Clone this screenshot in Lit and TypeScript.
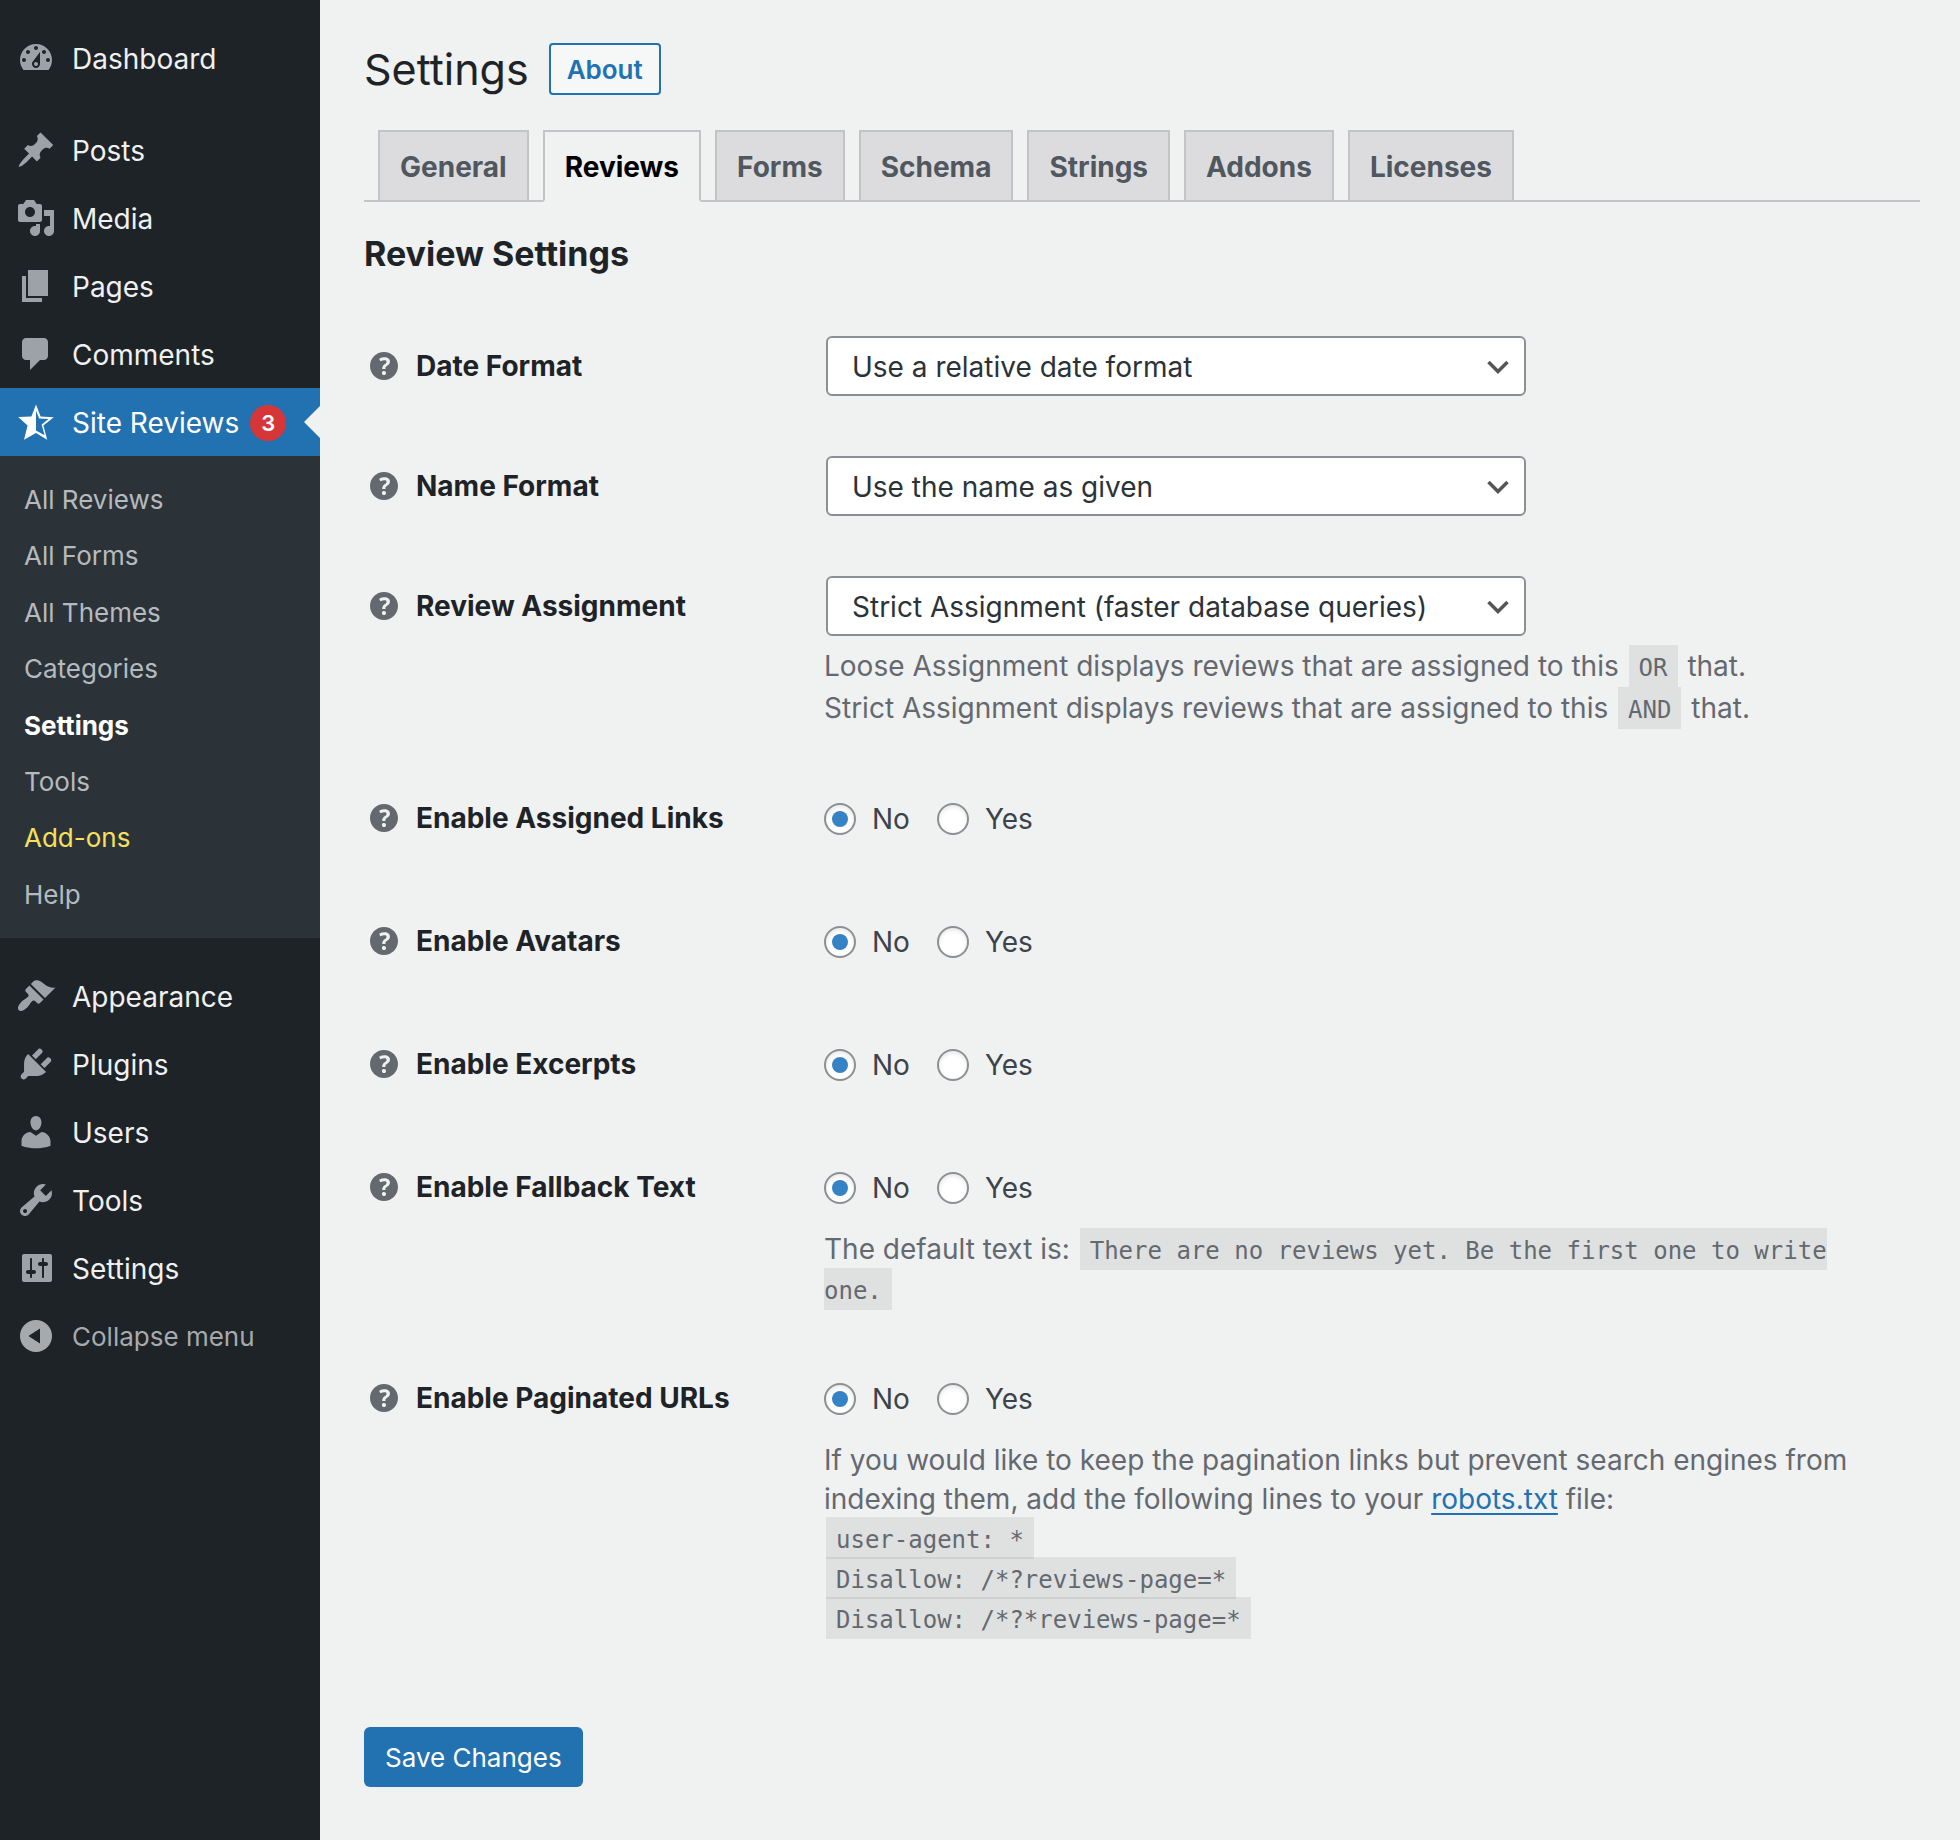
import { LitElement, html, css, svg, nothing, type TemplateResult } from "lit";
import { customElement, property, state } from "lit/decorators.js";
import { classMap } from "lit/directives/class-map.js";

const ICONS: Record<string, string> = {
  dashboard:
    "M3.76 16h12.48c1.1-1.37 1.76-3.11 1.76-5 0-4.42-3.58-8-8-8s-8 3.58-8 8c0 1.89.66 3.63 1.76 5zM10 4c.55 0 1 .45 1 1s-.45 1-1 1-1-.45-1-1 .45-1 1-1zM6 6c.55 0 1 .45 1 1s-.45 1-1 1-1-.45-1-1 .45-1 1-1zm8 0c.55 0 1 .45 1 1s-.45 1-1 1-1-.45-1-1 .45-1 1-1zm-5.37 5.55L12 7v6c0 1.1-.9 2-2 2s-2-.9-2-2c0-.57.24-1.08.63-1.45zM4 10c.55 0 1 .45 1 1s-.45 1-1 1-1-.45-1-1 .45-1 1-1zm12 0c.55 0 1 .45 1 1s-.45 1-1 1-1-.45-1-1 .45-1 1-1zm-5 3c0-.55-.45-1-1-1s-1 .45-1 1 .45 1 1 1 1-.45 1-1z",
  posts:
    "M10.44 3.02l1.82-1.82 6.36 6.35-1.83 1.82c-1.05-.68-2.48-.57-3.41.36l-.75.75c-.92.93-1.04 2.35-.35 3.41l-1.83 1.82-2.41-2.41-2.8 2.79c-.42.42-3.38 2.71-3.8 2.29s1.86-3.39 2.28-3.81l2.79-2.79L4.1 9.36l1.83-1.82c1.05.69 2.48.57 3.4-.36l.75-.75c.93-.92 1.05-2.35.36-3.41z",
  media:
    "M13 11V4c0-.55-.45-1-1-1h-1.67L9 1H5L3.67 3H2c-.55 0-1 .45-1 1v7c0 .55.45 1 1 1h10c.55 0 1-.45 1-1zM7 4.5c1.38 0 2.5 1.12 2.5 2.5S8.38 9.5 7 9.5 4.5 8.38 4.5 7 5.62 4.5 7 4.5zM14 6h5v10.5c0 1.38-1.12 2.5-2.5 2.5S14 17.88 14 16.5s1.12-2.5 2.5-2.5c.17 0 .34.02.5.05V9h-3V6zm-4 8.05V13h2v3.5c0 1.38-1.12 2.5-2.5 2.5S7 17.88 7 16.5 8.12 14 9.5 14c.17 0 .34.02.5.05z",
  pages: "M6 15V2h10v13H6zm-1 1h8v2H3V5h2v11z",
  comments:
    "M5 2h9c1.1 0 2 .9 2 2v7c0 1.1-.9 2-2 2h-2l-5 5v-5H5c-1.1 0-2-.9-2-2V4c0-1.1.9-2 2-2z",
  star:
    "M10 1.2l2.3 6.1 6.6.3-5.2 4.1 1.9 7.2-5.6-3.4-6 3.4 1.8-7.2L1.1 7.5l6.6-.2zM10 4.4v9.8l4.3 2.4-1.5-5.3 3.5-2.8-4.7-.2z",
  appearance:
    "M14.48 11.06L7.41 3.99l1.5-1.5c.5-.56 2.3-.47 3.51.32 1.21.8 1.43 1.28 2.91 2.1 1.18.64 2.45 1.26 4.45.85zm-.71.71L6.7 4.7 4.93 6.47c-.39.39-.39 1.02 0 1.41l1.06 1.06c.39.39.39 1.03 0 1.42-.6.6-1.43 1.11-2.21 1.69-.35.26-.7.53-1.01.84C1.43 14.23.4 16.08 1.4 17.07c.99 1 2.84-.03 4.18-1.36.31-.31.58-.66.85-1.02.57-.78 1.08-1.61 1.69-2.21.39-.39 1.02-.39 1.41 0l1.06 1.06c.39.39 1.02.39 1.41 0z",
  plugins:
    "M13.11 4.36L9.87 7.6 8 5.73l3.24-3.24c.35-.34 1.05-.2 1.56.32.52.51.66 1.21.31 1.55zm-8 1.77l.91-1.12 9.01 9.01-1.19.84c-.71.71-2.63 1.16-3.82 1.16H6.14L4.9 17.26c-.59.59-1.54.59-2.12 0-.59-.58-.59-1.53 0-2.12l1.24-1.24v-3.88c0-1.13.4-3.19 1.09-3.89zm7.26 3.97l3.24-3.24c.34-.35 1.04-.21 1.55.31.52.51.66 1.21.31 1.55l-3.24 3.25z",
  users:
    "M10 9.25c-2.27 0-2.73-3.44-2.73-3.44C7 4.02 7.82 2 9.97 2c2.16 0 2.98 2.02 2.71 3.81 0 0-.41 3.44-2.68 3.44zm0 2.57L12.72 10c2.39 0 4.52 2.33 4.52 4.53v2.49s-3.65 1.13-7.24 1.13c-3.65 0-7.24-1.13-7.24-1.13v-2.49c0-2.25 1.94-4.48 4.47-4.48z",
  tools:
    "M16.68 9.77c-1.34 1.34-3.3 1.67-4.95.99l-5.41 6.52c-.99.99-2.59.99-3.58 0s-.99-2.59 0-3.57l6.52-5.42c-.68-1.65-.35-3.61.99-4.95 1.28-1.28 3.12-1.62 4.72-1.06l-2.89 2.89 2.82 2.82 2.86-2.87c.53 1.58.18 3.39-1.08 4.65zM3.81 16.21c.4.39 1.04.39 1.43 0 .4-.4.4-1.04 0-1.43-.39-.4-1.03-.4-1.43 0-.39.39-.39 1.03 0 1.43z",
  settings:
    "M18 16V4c0-.55-.45-1-1-1H4c-.55 0-1 .45-1 1v12c0 .55.45 1 1 1h13c.55 0 1-.45 1-1zM8 11h1c.55 0 1 .45 1 1s-.45 1-1 1H8v1.5c0 .28-.22.5-.5.5s-.5-.22-.5-.5V13H6c-.55 0-1-.45-1-1s.45-1 1-1h1V5.5c0-.28.22-.5.5-.5s.5.22.5.5V11zm5-2h-1c-.55 0-1-.45-1-1s.45-1 1-1h1V5.5c0-.28.22-.5.5-.5s.5.22.5.5V7h1c.55 0 1 .45 1 1s-.45 1-1 1h-1v5.5c0 .28-.22.5-.5.5s-.5-.22-.5-.5V9z",
  collapse:
    "M10 2a8 8 0 1 0 0 16 8 8 0 0 0 0-16zM12 6.3v7.4L6.2 10z",
  help:
    "M17 10c0-3.87-3.14-7-7-7-3.87 0-7 3.13-7 7s3.13 7 7 7c3.86 0 7-3.13 7-7zm-6.3 1.48H9.14v-.43c0-.38.08-.7.24-.98s.46-.57.88-.89c.41-.29.68-.53.81-.71.14-.18.2-.39.2-.62 0-.25-.09-.44-.28-.58-.19-.13-.45-.19-.79-.19-.58 0-1.25.19-2 .57l-.64-1.28c.87-.49 1.8-.74 2.77-.74.81 0 1.45.2 1.92.58.48.39.71.91.71 1.55 0 .43-.09.8-.29 1.11-.19.32-.57.67-1.11 1.06-.38.28-.61.49-.71.63-.1.15-.15.34-.15.57v.35zm-1.47 2.74c-.18-.17-.27-.42-.27-.73 0-.33.08-.58.26-.75s.43-.25.77-.25c.32 0 .57.09.75.26s.27.42.27.74c0 .3-.09.55-.27.72-.18.18-.43.27-.75.27-.33 0-.58-.09-.76-.26z",
};

const icon = (name: string) => html`
  <svg class="icon" viewBox="0 0 20 20" aria-hidden="true">
    ${svg`<path fill-rule="evenodd" d=${ICONS[name]}></path>`}
  </svg>
`;

const base = css`
  * {
    box-sizing: border-box;
  }
  .icon {
    display: block;
    flex: none;
    width: 40px;
    height: 40px;
    fill: currentColor;
  }
`;

interface MenuEntry {
  label: string;
  icon: string;
  count?: number;
  children?: string[];
}

const MENU: MenuEntry[][] = [
  [{ label: "Dashboard", icon: "dashboard" }],
  [
    { label: "Posts", icon: "posts" },
    { label: "Media", icon: "media" },
    { label: "Pages", icon: "pages" },
    { label: "Comments", icon: "comments" },
    {
      label: "Site Reviews",
      icon: "star",
      count: 3,
      children: [
        "All Reviews",
        "All Forms",
        "All Themes",
        "Categories",
        "Settings",
        "Tools",
        "Add-ons",
        "Help",
      ],
    },
  ],
  [
    { label: "Appearance", icon: "appearance" },
    { label: "Plugins", icon: "plugins" },
    { label: "Users", icon: "users" },
    { label: "Tools", icon: "tools" },
    { label: "Settings", icon: "settings" },
  ],
];

@customElement("admin-menu")
export class AdminMenu extends LitElement {
  static styles = [
    base,
    css`
      :host {
        display: block;
        background: #1d2327;
        color: #f0f0f1;
      }
      .menu {
        display: flex;
        flex-direction: column;
        gap: 24px;
        padding-top: 24px;
      }
      .list {
        margin: 0;
        padding: 0;
        list-style: none;
      }
      .link {
        position: relative;
        display: flex;
        align-items: center;
        width: 100%;
        height: 68px;
        padding: 0 16px;
        gap: 16px;
        border: 0;
        background: none;
        font: inherit;
        text-align: left;
        text-decoration: none;
        color: inherit;
      }
      .link .icon {
        color: #9ca2a7;
      }
      .link.open {
        background: #2271b1;
        color: #fff;
      }
      .link.open .icon {
        color: #fff;
      }
      .link.open::after {
        content: "";
        position: absolute;
        right: 0;
        top: 18px;
        border: 16px solid transparent;
        border-left-width: 0;
        border-right-color: #f0f1f1;
      }
      .link.collapse,
      .link.collapse .icon {
        color: #a7aaad;
      }
      .link.collapse {
        font-size: 26px;
      }
      .name {
        display: flex;
        align-items: center;
        gap: 11px;
        padding-top: 2px;
        white-space: nowrap;
      }
      .count {
        width: 36px;
        border-radius: 18px;
        background: #d63638;
        font-size: 22px;
        font-weight: 600;
        line-height: 36px;
        text-align: center;
      }
      .sub {
        margin: 0;
        padding: 15px 0 16px;
        list-style: none;
        background: #2c3338;
        font-size: 26px;
        line-height: 1.4;
      }
      .sublink {
        display: block;
        padding: 11px 24px 9px;
        color: #b5babf;
        text-decoration: none;
      }
      .sublink.current {
        color: #fff;
        font-weight: 700;
      }
      .sublink.promo {
        color: #f6e05e;
      }
    `,
  ];

  private entry(item: MenuEntry) {
    return html`
      <li>
        <a class=${classMap({ link: true, open: !!item.children })} href="#">
          ${icon(item.icon)}
          <span class="name"
            >${item.label}${item.count
              ? html`<span class="count">${item.count}</span>`
              : nothing}</span
          >
        </a>
        ${item.children
          ? html`<ul class="sub">
              ${item.children.map(
                (c) => html`<li>
                  <a
                    class=${classMap({
                      sublink: true,
                      current: c === "Settings",
                      promo: c === "Add-ons",
                    })}
                    href="#"
                    >${c}</a
                  >
                </li>`
              )}
            </ul>`
          : nothing}
      </li>
    `;
  }

  render() {
    return html`
      <nav class="menu" aria-label="Main menu">
        ${MENU.map(
          (group, i) => html`<ul class="list">
            ${group.map((item) => this.entry(item))}
            ${i === MENU.length - 1
              ? html`<li>
                  <button class="link collapse" type="button">
                    ${icon("collapse")}<span class="name">Collapse menu</span>
                  </button>
                </li>`
              : nothing}
          </ul>`
        )}
      </nav>
    `;
  }
}

interface Setting {
  id: string;
  label: string;
  choice?: string;
  help?: TemplateResult;
}

const SETTINGS: Setting[] = [
  { id: "date", label: "Date Format", choice: "Use a relative date format" },
  { id: "name", label: "Name Format", choice: "Use the name as given" },
  {
    id: "assignment",
    label: "Review Assignment",
    choice: "Strict Assignment (faster database queries)",
    help: html`<p class="help spaced">
      Loose Assignment displays reviews that are assigned to this
      <code>OR</code> that.<br />Strict Assignment displays reviews that are
      assigned to this <code>AND</code> that.
    </p>`,
  },
  { id: "links", label: "Enable Assigned Links" },
  { id: "avatars", label: "Enable Avatars" },
  { id: "excerpts", label: "Enable Excerpts" },
  {
    id: "fallback",
    label: "Enable Fallback Text",
    help: html`<p class="help">
      The default text is:
      <code>There are no reviews yet. Be the first one to write one.</code>
    </p>`,
  },
  {
    id: "urls",
    label: "Enable Paginated URLs",
    help: html`<p class="help">
      If you would like to keep the pagination links but prevent search engines
      from indexing them, add the following lines to your
      <a class="ref" href="#">robots.txt</a> file:<br /><code
        >user-agent: *</code
      ><br /><code>Disallow: /*?reviews-page=*</code><br /><code
        >Disallow: /*?*reviews-page=*</code
      >
    </p>`,
  },
];

@customElement("setting-row")
export class SettingRow extends LitElement {
  @property({ attribute: false }) setting!: Setting;

  static styles = [
    base,
    css`
      :host {
        display: grid;
        grid-template-columns: 460px minmax(0, 1fr);
        padding: 30px 40px 30px 0;
      }
      .head {
        display: flex;
        align-items: center;
        gap: 12px;
        height: 60px;
        color: #1d2327;
        font-weight: 650;
      }
      .head .icon {
        color: #646970;
      }
      .field {
        position: relative;
        width: 700px;
        max-width: 100%;
        margin-left: 2px;
      }
      .select {
        display: block;
        width: 100%;
        height: 60px;
        padding: 2px 48px 0 24px;
        border: 2px solid #8c8f94;
        border-radius: 6px;
        appearance: none;
        background: #fff;
        color: #2c3338;
        font: inherit;
      }
      .chevron {
        position: absolute;
        right: 17px;
        top: 24px;
        width: 22px;
        height: 14px;
        fill: none;
        stroke: #555;
        stroke-width: 3.5;
        pointer-events: none;
      }
      .radios {
        display: flex;
        align-items: center;
        gap: 27px;
        height: 61px;
        margin-bottom: 2px;
      }
      .option {
        display: flex;
        align-items: center;
        gap: 16px;
      }
      .radio {
        display: grid;
        place-items: center;
        width: 32px;
        height: 32px;
        margin: 0;
        border: 2px solid #8c8f94;
        border-radius: 50%;
        appearance: none;
        background: #fff;
        box-shadow: inset 0 2px 4px rgba(0, 0, 0, 0.1);
      }
      .radio:checked::before {
        content: "";
        width: 16px;
        height: 16px;
        border-radius: 50%;
        background: #3582c4;
      }
      .help {
        margin: 12px 0 -2px;
        color: #646970;
        line-height: 39px;
      }
      .help.spaced {
        margin: 9px 0 -1px;
        line-height: 42px;
      }
      code {
        margin: 0 2px;
        padding: 9px 10px 5px;
        background: rgba(0, 0, 0, 0.07);
        font-family: "DejaVu Sans Mono", monospace;
        font-size: 24px;
        line-height: 38px;
      }
      .ref {
        color: #2271b1;
        text-decoration-thickness: 2px;
        text-underline-offset: 4px;
      }
    `,
  ];

  private control(s: Setting) {
    if (s.choice) {
      return html`<div class="field">
        <select class="select" id="control">
          <option>${s.choice}</option>
        </select>
        <svg class="chevron" viewBox="0 0 22 14" aria-hidden="true">
          <path d="M1.5 2l9.5 9.5L20.5 2"></path>
        </svg>
      </div>`;
    }
    return html`<div class="radios" role="radiogroup" aria-labelledby="label">
      ${["No", "Yes"].map(
        (v) => html`<label class="option"
          ><input
            class="radio"
            type="radio"
            name=${s.id}
            .checked=${v === "No"}
          />${v}</label
        >`
      )}
    </div>`;
  }

  render() {
    const s = this.setting;
    return html`
      <div class="head">
        ${icon("help")}
        ${s.choice
          ? html`<label for="control">${s.label}</label>`
          : html`<span id="label">${s.label}</span>`}
      </div>
      <div>${this.control(s)}${s.help ?? nothing}</div>
    `;
  }
}

const TABS = [
  "General",
  "Reviews",
  "Forms",
  "Schema",
  "Strings",
  "Addons",
  "Licenses",
];

@customElement("app-root")
export class AppRoot extends LitElement {
  @state() private tab = "Reviews";

  static styles = [
    base,
    css`
      :host {
        display: grid;
        grid-template-columns: 320px minmax(0, 1fr);
        min-height: 100vh;
        background: #f0f1f1;
        color: #3c434a;
        font-family: Inter, "Liberation Sans", sans-serif;
        font-size: 28px;
        line-height: 40px;
      }
      .main {
        padding: 40px 40px 52px 44px;
      }
      .top {
        display: flex;
        align-items: center;
        gap: 20px;
        height: 58px;
      }
      .title {
        margin: 0;
        color: #1d2327;
        font-size: 43px;
        font-weight: 400;
        line-height: 58px;
      }
      .about {
        padding: 2px 16px 0;
        border: 2px solid #2271b1;
        border-radius: 4px;
        background: #f6f7f7;
        color: #2271b1;
        font-size: 26px;
        font-weight: 600;
        line-height: 46px;
        text-decoration: none;
      }
      .tabs {
        display: flex;
        gap: 14px;
        margin-top: 32px;
        padding-left: 14px;
        border-bottom: 2px solid #c3c4c7;
      }
      .tab {
        padding: 11px 20px 9px;
        border: 2px solid #c3c4c7;
        border-bottom: 0;
        background: #dcdcde;
        color: #50575e;
        font-weight: 650;
        line-height: 48px;
        text-decoration: none;
      }
      .tab.active {
        margin-bottom: -2px;
        border-bottom: 2px solid #f0f1f1;
        background: #f0f1f1;
        color: #000;
      }
      .section {
        margin: 32px 0;
        color: #1d2327;
        font-size: 34px;
        font-weight: 650;
        line-height: 40px;
      }
      .save {
        height: 60px;
        margin-top: 60px;
        padding: 2px 21px 0;
        border: 0;
        border-radius: 6px;
        background: #2271b1;
        color: #fff;
        font: inherit;
        font-size: 26px;
      }
    `,
  ];

  render() {
    return html`
      <admin-menu></admin-menu>
      <main class="main">
        <div class="top">
          <h1 class="title">Settings</h1>
          <a class="about" href="#">About</a>
        </div>
        <nav class="tabs" aria-label="Settings sections">
          ${TABS.map(
            (t) => html`<a
              class=${classMap({ tab: true, active: t === this.tab })}
              href="#"
              @click=${(e: Event) => {
                e.preventDefault();
                this.tab = t;
              }}
              >${t}</a
            >`
          )}
        </nav>
        <h2 class="section">Review Settings</h2>
        <form @submit=${(e: Event) => e.preventDefault()}>
          ${SETTINGS.map(
            (s) => html`<setting-row .setting=${s}></setting-row>`
          )}
          <button class="save" type="submit">Save Changes</button>
        </form>
      </main>
    `;
  }
}
